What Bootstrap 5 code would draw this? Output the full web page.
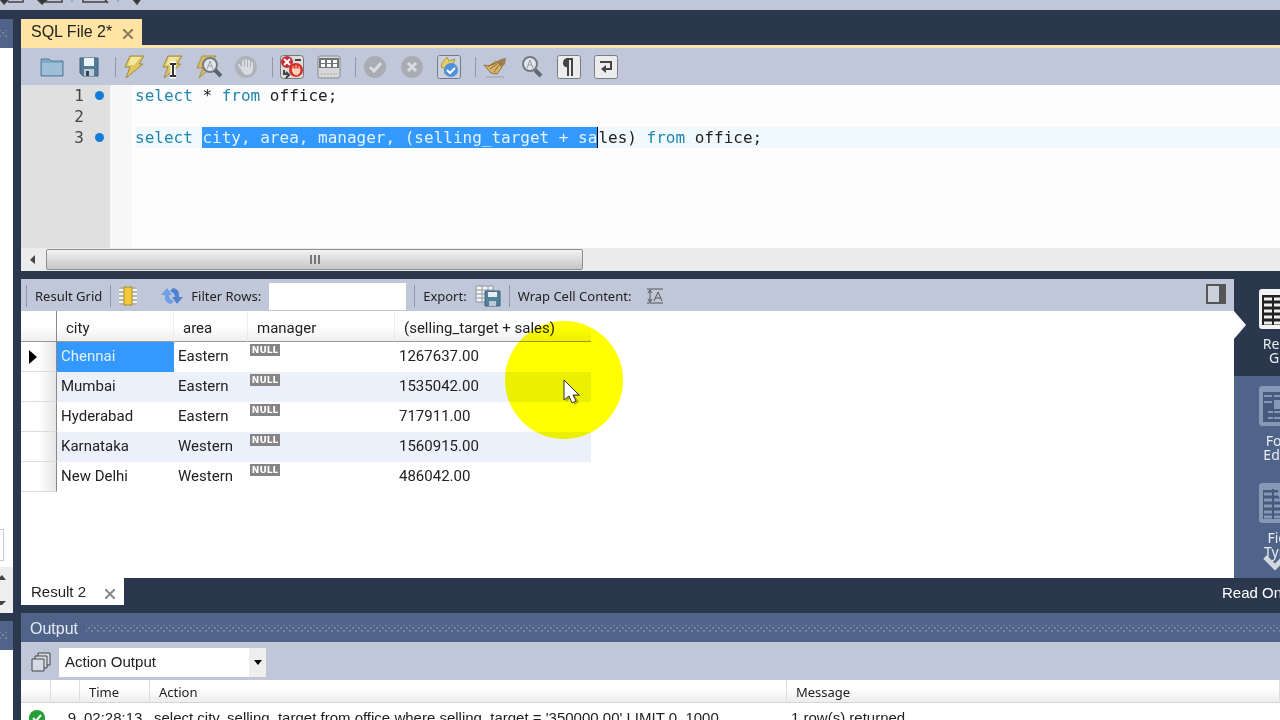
<!DOCTYPE html>
<html lang="en">
<head>
<meta charset="utf-8">
<meta name="viewport" content="width=device-width, initial-scale=1">
<title>SQL File 2*</title>
<link href="https://cdn.jsdelivr.net/npm/bootstrap@5.3.0/dist/css/bootstrap.min.css" rel="stylesheet">
<style>
:root{--navy:#2b374d;--slate:#50648a;--bar:#bfc7d8;--pick:#3399ff}
body{background:var(--navy);color:#222;font:15px/20px "Noto Sans","Open Sans",sans-serif}
svg{display:block;flex:none}
button{padding:0;border:0;background:none;color:inherit;display:block;flex:none}
.ui-arial{font-family:"Liberation Sans",Arial,sans-serif}
.bar-bg{background:var(--bar)}
.slate-bg{background:var(--slate)}
.top-strip{height:10px}
.side-strip{width:13px;margin-right:8px;padding-top:9px}
.strip-head{height:29px}
.strip-list{background:#fff}
.strip-field{height:32px;width:4px;border:1px solid #c3cbe0;border-left:0;margin-bottom:6px}
.strip-scroll{height:46px;background:#eee;font-size:10px}
.strip-gap{height:8px}
.strip-bottom{height:70px}
.dots{height:8px;background-image:radial-gradient(circle,#7184a6 1px,transparent 1px),radial-gradient(circle,#7184a6 1px,transparent 1px);background-size:6px 6px;background-position:0 0,3px 3px}
.tab-row{height:38px;padding-top:9px;border-bottom:3px solid #fbe3ac}
.file-tab{background:#ffe4a4;width:121px;height:29px;padding:0 9px 4px 10px;font-size:16px}
.tools{height:37px;padding-left:12px}
.tools .rule{height:20px;margin-left:8px}
.rule{width:1px;background:#8f99ac;flex:none}
.slot{width:37px;display:flex;justify-content:center}
.editor{height:163px;background:#fdfdfd;font:16px/21px "DejaVu Sans Mono",monospace}
.gutter{width:89px;background:#e0e0e0;color:#444}
.fold{width:22px;background:#f7f7f7}
.gut-line{height:21px;padding-right:6px}
.mark-col{width:20px;display:flex;justify-content:flex-end}
.dot{width:9px;height:9px;border-radius:50%;background:#127cd8}
.code{margin:0;padding:0 0 0 3px;overflow:hidden;font:inherit;color:#222}
.code .kw{color:#2385b0}
.code .picked{background:var(--pick);color:#e3f3ff;border-right:1px solid #000;padding:1px 0}
.line-now{background:#f0fafc}
.hscroll{height:23px;background:#ececec}
.hthumb{width:537px;height:21px;border:1px solid #8e8e8e;border-radius:2px;background:linear-gradient(#f3f3f3,#dcdcdc 50%,#c5c5c5)}
.mid{margin-top:8px}
.res-tools{height:32px;font-size:13px;padding:2px 0 0 5px}
.res-tools .rule{height:22px}
.filter-box{width:137px;height:27px;border:0;border-radius:0;background:#fff;padding:0 4px}
.res-table{width:570px;table-layout:fixed;border-collapse:separate;border-spacing:0;margin:0;font-family:Roboto,sans-serif}
.res-table th,.res-table td{height:30px;padding:0 4px 3px;font-weight:400;vertical-align:middle;white-space:nowrap;overflow:hidden}
.res-table thead th{height:31px;padding:4px 9px 0;background:linear-gradient(#fff 50%,#efefef);border-bottom:1px solid #999;border-right:1px solid #eee}
.res-table thead th:last-child{border-right:0}
.res-table tbody th{background:linear-gradient(90deg,#fff 50%,#e6e6e6);border-right:1px solid #888;border-bottom:1px solid #ddd;padding:0 4px}
.res-table thead th:first-child{border-right:1px solid #888}
.res-table tbody tr:nth-child(even) td{background:#ebf0fa}
.res-table td.cell-on{background:var(--pick);color:#dff1ff}
.res-table td.nul{vertical-align:top;padding:2px 2px}
.nul span{display:block;width:30px;height:12px;background:#858585;color:#fff;font:bold 9px/12px "DejaVu Sans",sans-serif;text-align:center}
.halo{position:absolute;left:484px;top:10px;width:118px;height:118px;border-radius:50%;background:#ffff00;mix-blend-mode:multiply}
.pointer{position:absolute;left:541px;top:67px}
.views{width:46px;overflow:hidden}
.view-btn{width:98px;height:97px;font-size:14px;line-height:14px;color:#e8edf6;padding-top:10px;display:flex;flex-direction:column;align-items:center;justify-content:flex-start;gap:8px}
.view-on{background:var(--navy)}
.notch{position:absolute;right:34px;top:32px;width:12px;height:28px;background:#fff;clip-path:polygon(0 0,100% 50%,0 100%)}
.more{position:absolute;left:29px;bottom:6px}
.res-foot{height:35px}
.res-tab{width:103px;height:27px;background:#fff;padding:0 9px 0 10px}
.readonly{width:58px;color:#fff;white-space:nowrap;overflow:hidden;font-size:15px;padding-top:5px}
.output{flex:none;height:107px;overflow:hidden}
.out-head{height:29px;color:#e6ebf5;font-size:16px;padding:2px 0 0 9px}
.out-tools{height:38px;padding:2px 0 0 10px}
.out-pick{width:207px;height:29px;border:0;border-radius:0;padding:0 6px;appearance:none;background:#fff;color:#222;display:block;font-size:15px}
.pick-arrow{position:absolute;right:0;top:0;width:17px;height:29px;background:#eee;pointer-events:none}
.log{width:100%;table-layout:fixed;border-collapse:separate;border-spacing:0;margin:0;background:#fff;white-space:nowrap}
.log th{height:23px;padding:2px 9px 0;font:13px/18px "Noto Sans",sans-serif;background:linear-gradient(#fff 40%,#ededed);border-right:1px solid #dedede;border-bottom:1px solid #d5d5d5}
.log td{height:28px;padding:1px 4px 0;font-size:15px}
</style>
</head>
<body class="vh-100 overflow-hidden d-flex flex-column">
<header class="top-strip bar-bg overflow-hidden flex-shrink-0">
<svg width="160" height="10" fill="none" stroke="#444" stroke-width="1.5"><path d="M8 2h15v-5M45 2h17v-5M83-2v4h23v-4M102-4l6 7"/><path d="M-1-2l5 6 6-6M36-2l6 6 7-6M131-3l6 7 5-7" fill="#333"/><path d="M72-1v3M118-1v3" stroke="#99a"/></svg>
</header>
<div class="d-flex flex-grow-1 overflow-hidden">
<aside class="side-strip d-flex flex-column flex-shrink-0 overflow-hidden">
<div class="strip-head slate-bg d-flex align-items-center flex-shrink-0"><div class="dots w-50"></div></div>
<div class="strip-list flex-grow-1 d-flex flex-column justify-content-end"><div class="strip-field"></div>
<div class="strip-scroll flex-shrink-0"><svg width="13" height="46" fill="#444"><path d="M0 10l2-2 4 5H0zM0 34h6l-4 4H0z"/></svg></div></div>
<div class="strip-gap flex-shrink-0"></div>
<div class="strip-head slate-bg d-flex align-items-center flex-shrink-0"><div class="dots w-50"></div></div>
<div class="strip-list strip-bottom flex-shrink-0"></div>
</aside>
<main class="d-flex flex-column flex-grow-1 overflow-hidden">
<div class="tab-row flex-shrink-0 ui-arial">
<div class="file-tab d-flex align-items-center justify-content-between"><span>SQL File 2*</span><button class="mt-1" aria-label="Close file"><svg width="10" height="10" stroke="#8d7c5c" stroke-width="2"><path d="M0 0l10 10M10 0L0 10"/></svg></button></div>
</div>
<div class="tools bar-bg d-flex align-items-center flex-shrink-0">
<button class="slot" aria-label="Open"><svg width="24" height="20" viewBox="0 0 24 20"><path d="M1 2h8l2 2h12v15H1z" fill="#7fa8c4" stroke="#587f9b"/><path d="M2 6h20v12H2z" fill="#9dc0d8"/></svg></button>
<button class="slot" aria-label="Save"><svg width="20" height="20" viewBox="0 0 20 20"><path d="M1 1h18v18H4l-3-3z" fill="#527b98" stroke="#3e6179"/><path d="M5 1h10v8H5z" fill="#edf3f6"/><path d="M5 12h10v7H5z" fill="#b9cbd7"/><path d="M7 14h3v5H7z" fill="#345"/></svg></button>
<span class="rule"></span>
<button class="slot" aria-label="Execute"><svg width="24" height="26" viewBox="0 0 24 26"><path d="M7 2h14l-5 8h4L3 24l4-11H2z" fill="#e3c75a" stroke="#9c8b4a"/><path d="M8 3h10l-7 8H5z" fill="#f5e9a0"/></svg></button>
<button class="slot" aria-label="Execute current statement"><svg width="24" height="26" viewBox="0 0 24 26"><path d="M8 2h14l-5 8h4L4 24l4-11H3z" fill="#dfc65c" stroke="#9c8b4a"/><path d="M9 3h10l-7 8H6z" fill="#f0e3a0"/><path d="M10 10h6M13 11v11M10 22h6" stroke="#fff" stroke-width="5"/><path d="M10 10h6M13 10v12M10 22h6" stroke="#333" stroke-width="2"/></svg></button>
<button class="slot" aria-label="Explain"><svg width="26" height="26" viewBox="0 0 26 26"><path d="M6 2h14l-6 8h5L3 24l4-10H1z" fill="#d3be66" stroke="#a99243"/><circle cx="14" cy="11" r="7" fill="#e1e6ec" stroke="#757b83" stroke-width="2"/><path d="M19 16l6 6" stroke="#5d6268" stroke-width="4"/><path d="M11 15l3-8 3 8M12 12h4" fill="none" stroke="#9aa1a8"/></svg></button>
<button class="slot" aria-label="Stop"><svg width="24" height="24" viewBox="0 0 24 24"><circle cx="12" cy="12" r="11" fill="#aeb2b9"/><path d="M7 13l-2-3M9 13V6M12 12V5M15 12V6M18 13V8" stroke="#d9dce1" stroke-width="2" stroke-linecap="round"/><path d="M6 12h13q0 8-6 8-4 0-7-8z" fill="#d9dce1"/></svg></button>
<span class="rule"></span>
<button class="slot" aria-label="Stop on error"><svg width="24" height="24" viewBox="0 0 24 24"><rect x=".5" y=".5" width="23" height="23" rx="3" fill="#ddd" stroke="#777"/><circle cx="7" cy="7" r="6" fill="#c72f38"/><path d="M4 4l6 6M10 4l-6 6" stroke="#fff" stroke-width="2"/><path d="M15 5h6M4 15v4h4M6 17l3 3-3 3" fill="none" stroke="#444" stroke-width="2"/><circle cx="16" cy="15" r="7" fill="#d4302b"/><path d="M12 14h8q0 6-4 6-3 0-4-6zM13 11v4M16 10v4M19 11v4" fill="#ffd0ba" stroke="#ffd0ba"/></svg></button>
<button class="slot" aria-label="Limit rows"><svg width="24" height="24" viewBox="0 0 24 24"><rect x="1" y="1" width="22" height="22" rx="2" fill="#d8d8d8" stroke="#85898f"/><path d="M2 3h20v10H2z" fill="#71757b"/><path d="M4 5h4v3H4zM10 5h4v3h-4zM16 5h4v3h-4zM4 9h4v3H4zM10 9h4v3h-4zM16 9h4v3h-4z" fill="#fff"/><path d="M4 19h16" stroke="#aaa" stroke-dasharray="2 1"/></svg></button>
<span class="rule"></span>
<button class="slot" aria-label="Commit"><svg width="24" height="24"><circle cx="12" cy="12" r="11" fill="#a9adb3"/><path d="M7 12l4 4 7-8" fill="none" stroke="#d9dce2" stroke-width="3"/></svg></button>
<button class="slot" aria-label="Rollback"><svg width="24" height="24"><circle cx="12" cy="12" r="11" fill="#a9adb3"/><path d="M8 8l8 8M16 8l-8 8" stroke="#d9dce2" stroke-width="3"/></svg></button>
<button class="slot" aria-label="Auto commit"><svg width="24" height="24" viewBox="0 0 24 24"><rect x=".5" y=".5" width="23" height="23" rx="2" fill="#cad1dc" stroke="#747b87"/><path d="M5 8l5-6 2 4 6-2-2 5 4 4-7 2-5 4-1-6-3-1z" fill="#e4cd63" stroke="#aa9854"/><circle cx="14" cy="15" r="7" fill="#4f91dc"/><path d="M10 15l3 3 5-5" fill="none" stroke="#fff" stroke-width="2"/></svg></button>
<span class="rule"></span>
<button class="slot" aria-label="Beautify"><svg width="26" height="24" viewBox="0 0 26 24"><path d="M24 3l-5 1-5 3 5 6 4-4z" fill="#9d7e50"/><path d="M14 6l6 6-5 7-6-1-7-8 5 1z" fill="#d8b468" stroke="#97733f"/><path d="M6 11l9-3M8 14l7-5M12 17l5-7" stroke="#8f6a38"/><path d="M4 22h18" stroke="#9ba3b2"/></svg></button>
<button class="slot" aria-label="Find"><svg width="24" height="24" viewBox="0 0 24 24"><circle cx="10" cy="9" r="7" fill="#dfe6ec" stroke="#737a82" stroke-width="2"/><path d="M15 15l6 6" stroke="#626970" stroke-width="4"/><path d="M7 13l3-8 3 8M8 10h4" fill="none" stroke="#939ba3"/></svg></button>
<button class="slot" aria-label="Show invisible characters"><svg width="24" height="24" viewBox="0 0 24 24"><rect x=".5" y=".5" width="23" height="23" rx="2" fill="#ececec" stroke="#787d85"/><path d="M15 4v17M11 4v17M9 4h7" stroke="#444" stroke-width="2"/><path d="M12 3q-6 0-6 5t6 4z" fill="#444"/></svg></button>
<button class="slot" aria-label="Wrap lines"><svg width="24" height="24" viewBox="0 0 24 24"><rect x=".5" y=".5" width="23" height="23" rx="2" fill="#ececec" stroke="#787d85"/><path d="M6 7h11v7h-6" fill="none" stroke="#444" stroke-width="2"/><path d="M12 10v8l-5-4z" fill="#444"/></svg></button>
</div>
<div class="editor d-flex flex-shrink-0">
<div class="gutter d-flex flex-column">
<div class="gut-line d-flex justify-content-end align-items-center"><span>1</span><span class="mark-col"><i class="dot"></i></span></div>
<div class="gut-line d-flex justify-content-end align-items-center"><span>2</span><span class="mark-col"></span></div>
<div class="gut-line d-flex justify-content-end align-items-center"><span>3</span><span class="mark-col"><i class="dot"></i></span></div>
</div>
<div class="fold"></div>
<div class="code flex-grow-1 text-nowrap"><div><span class="kw">select</span> * <span class="kw">from</span> office;</div><div>&nbsp;</div><div class="line-now"><span class="kw">select</span> <span class="picked">city, area, manager, (selling_target + sa</span>les) <span class="kw">from</span> office;</div></div>
</div>
<div class="hscroll d-flex align-items-center flex-shrink-0"><button class="px-2" aria-label="Scroll left"><svg width="9" height="10"><path d="M6 0v9L1 5z" fill="#444"/></svg></button><div class="hthumb d-flex justify-content-center align-items-center"><svg width="12" height="9" stroke="#777" stroke-width="2"><path d="M2 0v9M6 0v9M10 0v9"/></svg></div></div>
<section class="mid d-flex flex-grow-1 position-relative overflow-hidden">
<div class="d-flex flex-column flex-grow-1 bg-white">
<div class="res-tools bar-bg d-flex align-items-center flex-shrink-0">
<span class="rule"></span><span class="mx-2">Result Grid</span><span class="rule"></span>
<button class="ms-2" aria-label="Columns"><svg width="18" height="20" viewBox="0 0 18 20"><path d="M0 1h18v18H0z" fill="#f5f5f0"/><path d="M0 2h18M0 6h18M0 10h18M0 14h18M0 18h18" stroke="#777"/><path d="M5 1h8v18H5z" fill="#f4c838" stroke="#a48b32"/></svg></button>
<button class="ms-4" aria-label="Refresh"><svg width="22" height="18" viewBox="0 0 22 18"><path d="M0 8l6-7 5 7H8q0 4 5 6l-3 3Q3 16 4 8z" fill="#6f9fe8"/><path d="M22 10l-6 7-5-7h3q0-4-5-6l3-3q7 1 6 9z" fill="#4f80d2"/></svg></button>
<label for="flt" class="mx-2">Filter Rows:</label><input id="flt" class="filter-box" type="text">
<span class="rule ms-2"></span><span class="ms-2">Export:</span>
<button class="ms-2" aria-label="Export"><svg width="26" height="24" viewBox="0 0 26 24"><path d="M1 2h17v16H1z" fill="#f2f3f5" stroke="#8e969f"/><path d="M1 6h17M1 10h17M1 14h17M7 2v16M13 2v16" stroke="#8e969f"/><path d="M10 7h15v15H10z" fill="#55809c" stroke="#3d6078"/><path d="M13 8h9v5h-9z" fill="#e5edf1"/><path d="M14 17h7v5h-7z" fill="#b5c8d4"/></svg></button>
<span class="rule ms-2"></span><label class="ms-2" for="wrapbtn">Wrap Cell Content:</label>
<button id="wrapbtn" class="ms-3" aria-label="Wrap cell content"><svg width="16" height="16" viewBox="0 0 16 16" fill="none" stroke="#555"><path d="M0 1h16M0 15h16M3 2v12M1 5l2-3 2 3M1 11l2 3 2-3M7 13l4-9 4 9M8 10h6"/></svg></button>
<button class="ms-auto me-2 pb-1" aria-label="Toggle side panel"><svg width="20" height="20"><path d="M1 1h18v18H1z" fill="#cbd1dc" stroke="#555" stroke-width="2"/><path d="M13 1h6v18h-6z" fill="#555"/></svg></button>
</div>
<div class="position-relative flex-grow-1">
<table class="res-table">
<colgroup><col style="width:36px"><col style="width:117px"><col style="width:74px"><col style="width:147px"><col style="width:196px"></colgroup>
<thead><tr><th></th><th>city</th><th>area</th><th>manager</th><th>(selling_target + sales)</th></tr></thead>
<tbody>
<tr><th><svg class="ms-1" width="8" height="14"><path d="M0 0v14l8-7z" fill="#000"/></svg></th><td class="cell-on">Chennai</td><td>Eastern</td><td class="nul"><span>NULL</span></td><td>1267637.00</td></tr>
<tr><th></th><td>Mumbai</td><td>Eastern</td><td class="nul"><span>NULL</span></td><td>1535042.00</td></tr>
<tr><th></th><td>Hyderabad</td><td>Eastern</td><td class="nul"><span>NULL</span></td><td>717911.00</td></tr>
<tr><th></th><td>Karnataka</td><td>Western</td><td class="nul"><span>NULL</span></td><td>1560915.00</td></tr>
<tr><th></th><td>New Delhi</td><td>Western</td><td class="nul"><span>NULL</span></td><td>486042.00</td></tr>
</tbody></table>
<div class="halo"></div>
<svg class="pointer" width="20" height="28" viewBox="0 0 20 28"><path d="M4 4v20l5-4 4 7 4-3-4-6h6z" fill="#660" opacity=".45"/><path d="M2 2v20l5-4 3 7 4-2-3-6h6z" fill="#fff" stroke="#333"/></svg>
</div>
</div>
<nav class="views slate-bg flex-shrink-0 position-relative">
<button class="view-btn view-on"><svg width="48" height="40"><rect width="48" height="40" rx="3" fill="#f3f3f5"/><path d="M4 6h40v30H4z" fill="#222"/><path d="M5 10h40M5 16h40M5 22h40M5 28h40M5 34h40" stroke="#eee" stroke-width="3"/><path d="M4 6v30M14 6v30M25 6v30" stroke="#222" stroke-width="2"/></svg><span>Result<br>Grid</span></button>
<button class="view-btn"><svg width="48" height="40"><rect width="48" height="40" rx="3" fill="#8798b6"/><path d="M4 6h40v30H4z" fill="#465a7e"/><path d="M5 10h8M5 16h8M9 26h5M9 32h5M15 10h27M15 26h27M15 32h27" stroke="#8798b6" stroke-width="2"/><path d="M15 14h26v9H15z" fill="#8798b6"/></svg><span>Form<br>Editor</span></button>
<button class="view-btn"><svg width="48" height="40"><rect width="48" height="40" rx="3" fill="#8798b6"/><path d="M4 7h40v29H4z" fill="#465a7e"/><path d="M5 11h40M5 17h40M5 23h40M5 29h40M5 34h40" stroke="#8798b6" stroke-width="3"/><path d="M14 6v30" stroke="#465a7e" stroke-width="2"/><circle cx="28" cy="10" r="9" fill="#8798b6"/></svg><span>Field<br>Types</span></button>
<svg class="more" width="24" height="24" fill="none" stroke="#d3d8df" stroke-width="5"><path d="M2 9l10 10 10-10"/></svg>
</nav>
<div class="notch"></div>
</section>
<div class="res-foot ui-arial d-flex justify-content-between flex-shrink-0">
<div class="res-tab d-flex align-items-center justify-content-between">Result 2<button class="mt-1" aria-label="Close result"><svg width="10" height="10" stroke="#888" stroke-width="2"><path d="M0 0l10 10M10 0L0 10"/></svg></button></div>
<span class="readonly">Read Only</span>
</div>
<section class="output ui-arial">
<div class="out-head slate-bg d-flex align-items-center"><span class="me-2">Output</span><div class="dots flex-grow-1"></div></div>
<div class="out-tools bar-bg d-flex align-items-center">
<svg width="20" height="20" viewBox="0 0 20 20" fill="#d5dae3" stroke="#444"><path d="M7 1h12v12H7z"/><path d="M4 4h12v12H4z"/><path d="M1 7h12v12H1z"/></svg>
<div class="position-relative ms-2"><select class="out-pick" aria-label="Output type"><option>Action Output</option></select><span class="pick-arrow d-flex align-items-center justify-content-center"><svg width="8" height="5"><path d="M0 0h8L4 5z"/></svg></span></div>
</div>
<table class="log">
<colgroup><col style="width:30px"><col style="width:29px"><col style="width:70px"><col style="width:637px"><col></colgroup>
<thead><tr><th></th><th></th><th>Time</th><th>Action</th><th>Message</th></tr></thead>
<tbody><tr><td><svg class="ms-1" width="16" height="16"><circle cx="8" cy="8" r="8" fill="#23a033"/><path d="M4 8l3 3 5-6" fill="none" stroke="#fff" stroke-width="2"/></svg></td><td class="text-end">9</td><td>02:28:13</td><td>select city, selling_target from office where selling_target = '350000.00' LIMIT 0, 1000</td><td>1 row(s) returned</td></tr></tbody>
</table>
</section>
</main>
</div>
<script src="https://cdn.jsdelivr.net/npm/bootstrap@5.3.0/dist/js/bootstrap.bundle.min.js"></script>
</body>
</html>
